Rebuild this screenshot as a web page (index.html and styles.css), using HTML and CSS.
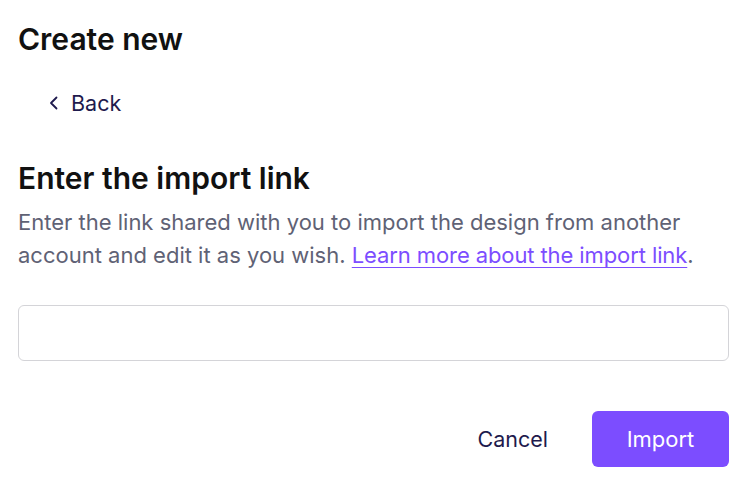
FILE: index.html
```html
<!DOCTYPE html>
<html>
<head>
<meta charset="utf-8">
<link rel="stylesheet" href="styles.css">
</head>
<body>
<div class="page">
  <h1 class="title">Create new</h1>
  <a class="back" href="#">
    <svg class="chev" width="10" height="14" viewBox="0 0 10 14"><path d="M7.5 1.5 L2 7 L7.5 12.5" fill="none" stroke="currentColor" stroke-width="1.8" stroke-linecap="round" stroke-linejoin="round"/></svg>
    <span>Back</span>
  </a>
  <h2 class="heading">Enter the import link</h2>
  <p class="desc">Enter the link shared with you to import the design from another account and edit it as you wish. <a class="link" href="#">Learn more about the import link</a>.</p>
  <input class="field" type="text">
  <div class="actions">
    <button class="btn cancel">Cancel</button>
    <button class="btn primary">Import</button>
  </div>
</div>
</body>
</html>
```
FILE: styles.css
```css
html, body { margin: 0; padding: 0; background: #fff; }
body { font-family: Inter, "Noto Sans", sans-serif; }
.page { padding: 19px 27px 0 18px; display: flex; flex-direction: column; }
.title { margin: 0; font-size: 30px; font-weight: 600; line-height: 40px; color: #111; }
.back { display: flex; align-items: center; gap: 12px; margin: 29px 0 0 31px; color: #1e1a4d; text-decoration: none; font-size: 21.5px; line-height: 30px; align-self: flex-start; }
.chev { display: block; }
.heading { margin: 40px 0 0 0; font-size: 30px; font-weight: 600; line-height: 40px; color: #111; }
.desc { margin: 8px 0 0 0; font-size: 22px; line-height: 33px; color: #5f6275; }
.link { color: #7c4dff; text-decoration: underline; text-underline-offset: 4px; text-decoration-thickness: 1px; letter-spacing: -0.1px; }
.field { margin-top: 33px; height: 56px; box-sizing: border-box; border: 1px solid #d4d4d8; border-radius: 6px; width: 100%; }
.actions { display: flex; justify-content: flex-end; gap: 22px; margin-top: 50px; }
.btn { font-family: Inter, "Noto Sans", sans-serif; font-size: 22px; height: 56px; border: none; border-radius: 6px; cursor: pointer; }
.cancel { background: transparent; color: #1e1a4d; padding: 0 22px; font-size: 21.5px; }
.primary { background: #7c4dff; color: #fff; width: 137px; padding: 0; }
```
